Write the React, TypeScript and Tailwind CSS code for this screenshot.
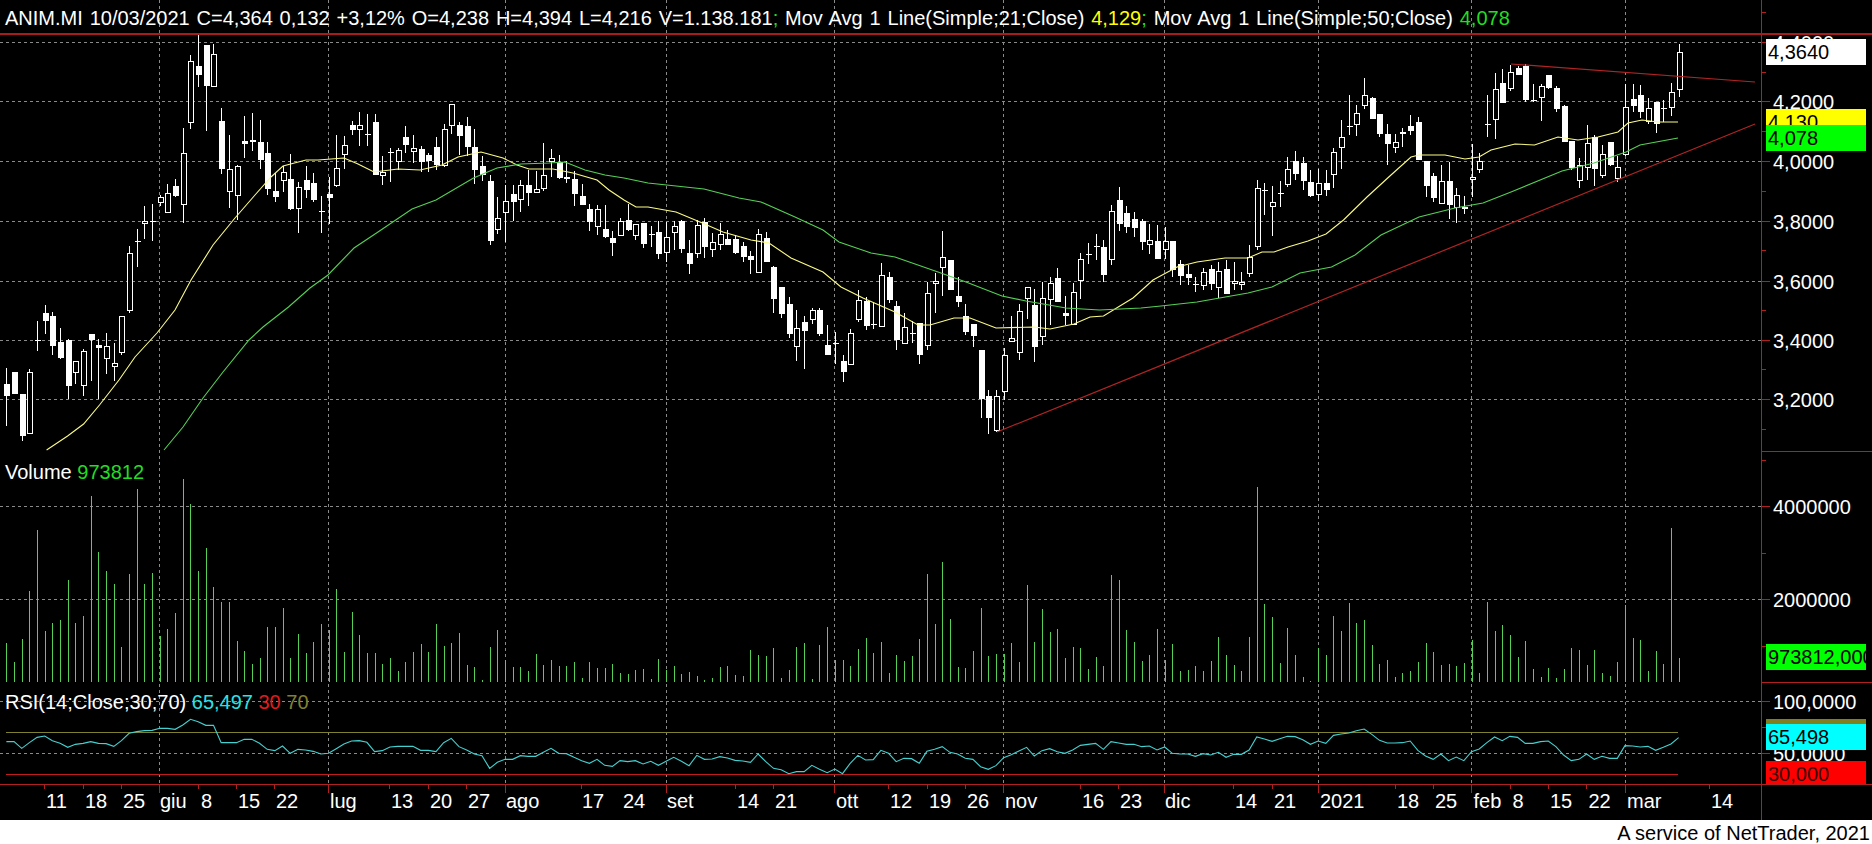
import React from 'react';

// bar spacing on the x axis, first bar sits at 6.37
const step = 7.671;
const barX = (i: number) => 6.37 + step * i;

// hi, lo, bodyTop, bodyBottom, filled
const candles: number[][] = [
  [368,426,384,396,1],[372,394,372,394,1],[394,441,394,436,1],[369,433,372,433,0],[321,351,340,341,1],[305,334,313,321,1],[312,355,316,346,1],[328,359,342,358,1],[339,399,340,386,1],[361,384,361,372,0],
  [349,396,351,385,0],[334,381,334,340,1],[339,399,345,348,1],[333,374,346,358,0],[343,381,363,366,0],[316,355,316,352,0],[246,313,253,310,0],[229,267,241,242,1],[206,239,221,223,0],[204,241,221,222,1],
  [195,206,197,202,0],[184,212,193,212,0],[179,197,186,196,1],[128,223,153,204,0],[55,129,61,122,0],[34,87,66,75,1],[45,131,45,86,1],[44,86,54,86,0],[108,174,121,169,1],[135,208,169,191,0],
  [165,220,166,195,0],[116,158,141,144,1],[113,151,140,142,1],[120,169,142,160,1],[142,195,153,189,1],[173,202,191,197,1],[166,192,172,180,0],[154,210,179,209,1],[182,233,187,208,0],[166,198,180,190,1],
  [173,202,183,200,1],[196,233,211,212,1],[177,224,194,198,1],[135,187,168,185,0],[136,169,145,154,0],[121,135,125,130,1],[112,146,125,129,0],[114,146,134,135,1],[114,175,122,175,1],[156,185,172,175,0],
  [148,182,152,153,1],[148,170,150,161,0],[126,153,137,145,1],[135,163,148,151,0],[146,172,149,162,1],[153,172,155,161,1],[137,170,147,165,1],[124,167,129,165,0],[104,134,104,125,0],[122,155,125,136,1],
  [117,156,126,147,1],[129,184,147,170,1],[156,181,166,175,1],[175,245,181,241,1],[197,234,218,229,0],[185,242,201,212,0],[185,221,194,202,1],[180,212,185,199,0],[170,206,185,193,1],[171,193,189,192,0],
  [143,191,175,188,0],[149,177,158,161,0],[155,179,162,178,1],[161,183,177,178,0],[171,206,179,194,1],[184,205,196,205,1],[204,231,209,222,1],[205,235,209,226,0],[205,238,229,237,1],[231,256,238,243,1],
  [218,236,221,235,0],[204,231,220,230,1],[224,240,224,235,0],[223,248,223,244,1],[226,247,234,235,1],[221,259,232,254,1],[222,262,237,252,0],[221,250,226,232,0],[220,253,221,249,1],[240,274,253,264,1],
  [220,258,225,253,0],[218,258,222,247,1],[233,257,242,249,0],[223,250,234,244,0],[230,245,239,245,1],[235,254,239,253,1],[242,262,246,257,1],[251,274,256,260,1],[229,272,234,272,0],[232,262,238,262,1],
  [266,313,267,299,1],[287,318,287,314,1],[297,338,304,334,1],[310,361,328,346,0],[316,369,322,331,1],[308,324,310,319,0],[308,336,310,334,1],[325,355,345,355,1],[332,364,343,344,1],[355,382,361,372,1],
  [329,365,333,364,0],[290,322,300,319,0],[297,330,301,326,1],[302,329,324,325,1],[263,326,275,326,0],[272,303,277,300,1],[301,350,306,340,1],[313,343,327,343,0],[321,343,333,334,1],[323,364,323,355,1],
  [282,350,293,345,0],[273,313,281,283,0],[231,296,257,267,0],[260,290,260,290,1],[277,307,296,302,1],[304,335,316,332,1],[324,347,324,336,1],[350,418,350,399,1],[390,434,396,418,1],[390,432,396,430,0],
  [348,400,355,391,0],[316,341,338,341,0],[304,360,311,352,0],[287,319,287,298,0],[289,362,305,347,1],[282,345,298,336,0],[277,325,283,299,0],[268,302,278,302,1],[296,325,313,316,1],[283,324,292,324,0],
  [253,299,259,280,0],[243,264,254,255,1],[234,260,246,247,1],[240,282,247,275,1],[205,265,211,259,0],[187,231,200,224,1],[206,233,213,227,1],[212,237,219,228,1],[219,250,221,242,1],[224,254,240,244,0],
  [225,259,241,259,1],[227,259,241,249,0],[241,277,241,270,1],[260,285,264,276,1],[265,285,274,278,1],[277,292,284,285,1],[268,290,272,285,0],[265,290,269,284,1],[262,298,271,287,0],[260,294,269,294,1],
  [262,290,281,283,0],[272,290,282,284,0],[245,277,257,273,0],[180,250,188,246,0],[183,215,190,191,1],[186,236,202,206,0],[181,207,193,194,1],[157,187,169,184,0],[151,180,161,174,1],[157,190,163,181,1],
  [170,197,182,196,1],[169,201,183,194,0],[170,196,183,190,1],[148,188,152,174,0],[120,169,137,147,0],[95,135,126,127,1],[105,136,113,124,0],[78,109,95,105,0],[97,119,98,119,1],[114,137,114,134,1],
  [124,165,134,144,1],[134,153,142,147,0],[128,147,132,134,1],[115,135,126,131,1],[117,160,122,160,1],[161,197,161,186,1],[173,202,176,198,1],[165,203,181,203,0],[162,219,181,205,1],[188,223,195,207,0],
  [196,214,207,209,1],[144,197,177,179,0],[153,173,161,169,0],[95,137,124,125,1],[73,139,89,119,0],[69,103,83,103,1],[65,91,72,88,0],[66,75,68,75,1],[64,102,66,100,1],[84,102,100,101,1],
  [84,121,86,97,0],[75,89,75,88,1],[86,112,88,109,1],[105,142,106,142,1],[141,170,141,168,1],[158,188,165,180,0],[125,180,143,167,0],[135,186,137,169,1],[145,178,154,175,0],[142,166,142,165,1],
  [156,182,167,178,0],[84,156,107,154,0],[84,112,99,106,1],[85,118,95,112,1],[98,124,108,121,0],[102,133,102,124,1],[100,122,108,109,1],[83,116,92,107,0],[44,97,52,89,0],
];

// traced at 3x, y = 460 + value / 3
const volumeTops = [
  550,606,538,393,210,513,489,480,360,489,468,108,276,333,372,561,342,87,372,339,528,507,459,57,132,333,264,381,426,426,543,573,612,594,501,501,444,594,522,579,546,492,510,387,576,456,525,579,579,612,594,633,606,576,552,576,492,558,549,519,615,621,660,561,510,600,621,621,633,582,615,600,618,618,606,654,606,624,624,612,639,
  642,630,627,657,597,630,618,642,636,648,660,654,621,618,645,648,570,585,588,564,654,630,561,549,657,555,501,600,600,618,567,534,579,546,639,585,603,588,537,342,492,306,477,621,624,573,444,588,582,582,549,606,375,546,447,516,507,594,561,564,627,591,618,345,360,510,546,603,585,507,600,552,633,630,618,633,603,531,585,615,633,
  531,81,432,471,609,504,585,651,663,564,585,468,513,429,489,480,555,612,600,651,639,633,606,549,576,615,612,618,609,540,639,426,513,495,525,591,543,627,651,624,654,627,564,570,615,570,639,648,606,435,534,540,633,573,612,204,594,
];
const rsi = [
  845,845,865,848,832,828,842,850,862,853,850,845,850,851,859,842,820,815,812,811,805,805,808,795,778,785,796,796,848,848,848,838,838,850,868,872,858,880,868,870,874,882,880,866,852,843,842,847,875,872,861,859,859,859,871,871,875,848,835,860,870,882,887,925,907,898,898,887,889,889,877,865,880,881,892,902,910,898,916,919,902,
  905,902,912,904,916,904,892,904,917,886,898,897,890,894,901,903,907,882,905,925,929,941,935,935,916,928,938,927,941,910,886,900,899,871,880,905,895,896,910,874,868,860,877,882,895,898,920,928,917,893,884,873,862,888,872,866,875,880,870,856,853,850,868,845,849,853,853,860,858,870,861,880,882,882,889,881,885,877,892,883,883,
  870,831,837,844,836,829,830,839,853,843,850,826,822,819,812,807,823,841,849,849,848,843,871,888,898,882,902,891,902,875,867,848,831,842,829,832,850,850,845,843,860,885,902,898,882,898,889,895,895,857,858,861,859,871,862,852,833,
];

const ma21 = '46.6,450 67.6,436 83.6,424 99.5,405 119,380 135,357 157,333 175,310 191,280 213,245 235,218 255,195 271,177 283,166 306,160 318,160 344,158 358,164 374,172 398,169 420,170 442,165 458,157 481,152 503,158 517,165 529,169 553,169 573,173 597,180 609,190 624,200 636,207 648,207 676,212 700,222 723,232 751,240 769,243 791,258 823,272 841,287 863,298 895,312 918,325 930,325 954,318 970,318 996,328 1034,327 1050,329 1074,324 1090,317 1103.5,316 1133,298 1153,280 1177,267 1197,262 1225,258 1248,258 1262,252 1274,252 1288,247 1308,241 1326,234 1343.5,220 1367,197 1391,175 1411,157 1419,155 1445,155 1465,159 1479,157 1491,150 1515,144 1534.5,145 1558,137 1578,140 1598,137 1618,132 1628,123 1642,120 1658,122 1678,122';
const ma50 = '164,450 183,427 203,398 223,372 249,340 263,327 288.5,307 310,288 328,275 354,248 378,232 412,209 436,200 473.5,178 497,168 521,164 549,163 565,162 585,170 605,175 624,178 648,183 704,189 739,198 761,202 795,217 823,230 839,242 871,253 895,257 938,272 966,282 1002,296 1026,301 1066,308 1099.5,310 1141,308 1161,306 1197,302 1248,293 1272,287 1300,273 1331.5,267 1355,255 1381,235 1419,217 1455,208 1483,203 1511,192 1562,171 1594,163 1626,152 1640,145 1678,138';

const gridY = [42.5, 101.5, 161.5, 221.5, 281.5, 340.5, 399.5, 506.5, 599.5, 701.5, 753.5];
const gridX = [159.5, 328.5, 505.5, 666.5, 834.5, 1003.5, 1164.5, 1318.5, 1471.5, 1625.5];
const minorX = [44.5, 83.5, 121.5, 198.5, 236.5, 274.5, 389.5, 428.5, 466.5, 581.5, 735.5, 773.5, 888.5, 927.5, 965.5, 1080.5, 1118.5, 1233.5, 1272.5, 1395.5, 1433.5, 1510.5, 1548.5, 1586.5, 1709.5];
const minorY = [12.5, 72.5, 131.5, 191.5, 250.5, 310.5, 369.5, 429.5, 460.5, 553.5, 646.5, 727.5];

const dateLabels: [string, number][] = [
  ['11', 46], ['18', 85], ['25', 123], ['giu', 160], ['8', 201], ['15', 238], ['22', 276], ['lug', 330], ['13', 391], ['20', 430], ['27', 468], ['ago', 506], ['17', 582], ['24', 623], ['set', 667], ['14', 737], ['21', 775], ['ott', 836], ['12', 890], ['19', 929], ['26', 967], ['nov', 1005], ['16', 1082], ['23', 1120], ['dic', 1165], ['14', 1235], ['21', 1274], ['2021', 1320], ['18', 1397], ['25', 1435], ['feb', 1473.5], ['8', 1512.5], ['15', 1550], ['22', 1588.5], ['mar', 1627], ['14', 1711],
];
const axisLabels: [string, number][] = [
  ['4,4000', 42.5], ['4,2000', 101.5], ['4,0000', 161.5], ['3,8000', 221.5], ['3,6000', 281.5], ['3,4000', 340.5], ['3,2000', 399.5], ['4000000', 506.5], ['2000000', 599.5], ['100,0000', 701.5], ['50,0000', 753.5],
];

function Candle({ i, c }: { i: number; c: number[] }) {
  const x = Math.round(barX(i));
  const [hi, lo, top, bot, filled] = c;
  return (
    <g>
      <rect x={x} y={hi} width={1} height={lo - hi} className="fill-white" />
      {filled ? (
        <rect x={x - 2} y={top} width={6} height={bot - top} className="fill-white" />
      ) : (
        <rect x={x - 2 + 0.5} y={top + 0.5} width={5} height={bot - top} className="fill-black stroke-white" />
      )}
    </g>
  );
}

function AxisBox({ y, h, bg, text, textY, color }: { y: number; h: number; bg: string; text?: string; textY?: number; color?: string }) {
  return (
    <svg x={1766} y={y} width={100} height={h}>
      <rect width={100} height={h} className={bg} />
      {text && (
        <text x={2} y={(textY ?? 0) - y + 7} className={color ?? 'fill-black'}>
          {text}
        </text>
      )}
    </svg>
  );
}

export default function App() {
  return (
    <div className="flex h-[844px] w-[1872px] flex-col overflow-hidden bg-white font-['Liberation_Sans',Arial,sans-serif] text-[20px]">
      <div className="relative h-[820px] bg-black">
        <svg width={1872} height={820} className="absolute inset-0 text-[20px]">
          {/* grid */}
          {gridY.map((y) => (
            <line key={y} x1={0} x2={1761} y1={y} y2={y} strokeDasharray="3 3" className="stroke-[#8a8a8a]" />
          ))}
          {gridX.map((x) => (
            <line key={x} x1={x} x2={x} y1={0} y2={784} strokeDasharray="3 3" className="stroke-[#8a8a8a]" />
          ))}

          {/* axes */}
          <g className="stroke-[#b02020]" shapeRendering="crispEdges">
            <line x1={0} x2={1872} y1={784.5} y2={784.5} />
            <line x1={1761.5} x2={1761.5} y1={0} y2={820} />
            <line x1={1761} x2={1872} y1={451.5} y2={451.5} />
            <line x1={1761} x2={1872} y1={682.5} y2={682.5} />
            {gridX.map((x) => (
              <line key={x} x1={x} x2={x} y1={784} y2={793} />
            ))}
            {minorX.map((x) => (
              <line key={x} x1={x} x2={x} y1={784} y2={789} />
            ))}
            {gridY.map((y) => (
              <line key={y} x1={1761} x2={1770} y1={y} y2={y} />
            ))}
            {minorY.map((y) => (
              <line key={y} x1={1761} x2={1766} y1={y} y2={y} />
            ))}
          </g>

          {/* price pane */}
          <g shapeRendering="crispEdges">
            {candles.map((c, i) => (
              <Candle key={i} i={i} c={c} />
            ))}
          </g>
          <polyline points={ma21} fill="none" strokeWidth={1.1} className="stroke-[#fbfb85]" />
          <polyline points={ma50} fill="none" strokeWidth={1.1} className="stroke-[#55d055]" />
          <line x1={997} y1={432} x2={1755} y2={124} strokeWidth={1.2} className="stroke-[#b02424]" />
          <line x1={1511} y1={64} x2={1755} y2={82} strokeWidth={1.2} className="stroke-[#b02424]" />

          {/* volume pane */}
          <g className="stroke-[#55d055]" shapeRendering="crispEdges">
            {volumeTops.map((t, i) => (
              <line key={i} x1={Math.round(barX(i)) + 0.5} x2={Math.round(barX(i)) + 0.5} y1={460 + t / 3} y2={682} />
            ))}
          </g>

          {/* rsi pane */}
          <line x1={6} x2={1678} y1={732.5} y2={732.5} className="stroke-[#80802e]" />
          <line x1={6} x2={1678} y1={774.5} y2={774.5} className="stroke-[#c01c1c]" />
          <polyline points={rsi.map((v, i) => `${barX(i)},${460 + v / 3}`).join(' ')} fill="none" strokeWidth={1.1} className="stroke-[#45d0d0]" />

          {/* labels */}
          <text x={5} y={479} className="fill-white">
            Volume <tspan className="fill-[#22dd22]">973812</tspan>
          </text>
          <text x={5} y={709} className="fill-white">
            RSI(14;Close;30;70) <tspan className="fill-[#2ee0e0]">65,497</tspan> <tspan className="fill-[#e01c1c]">30</tspan> <tspan className="fill-[#808030]">70</tspan>
          </text>
          {dateLabels.map(([t, x], i) => (
            <text key={i} x={x} y={808} className="fill-white">
              {t}
            </text>
          ))}
          {axisLabels.map(([t, y]) => (
            <text key={t} x={1773} y={y + 7} className="fill-white">
              {t}
            </text>
          ))}

          {/* last value boxes */}
          <AxisBox y={39} h={26} bg="fill-white" text="4,3640" textY={52} />
          <AxisBox y={109} h={26} bg="fill-[#ffff00]" text="4,130" textY={122} />
          <AxisBox y={125} h={26} bg="fill-[#00ff00]" text="4,078" textY={138} />
          <AxisBox y={644} h={26} bg="fill-[#00ff00]" text="973812,000" textY={657} />
          <AxisBox y={719} h={10} bg="fill-[#808020]" />
          <AxisBox y={724} h={26} bg="fill-[#00ffff]" text="65,498" textY={737} />
          <AxisBox y={761} h={23} bg="fill-[#ff0000]" text="30,000" textY={774} color="fill-[#3a0000]" />
        </svg>

        <div className="relative h-[35px] whitespace-pre border-b-2 border-[#a81c1c] pl-[5px] pt-[7px] leading-[22px] text-white [word-spacing:1.3px]">
          ANIM.MI 10/03/2021 C=4,364 0,132 +3,12% O=4,238 H=4,394 L=4,216 V=1.138.181<span className="text-[#22dd22]">;</span> Mov Avg 1 Line(Simple;21;Close) <span className="text-[#ffff00]">4,129</span><span className="text-[#22dd22]">;</span> Mov Avg 1 Line(Simple;50;Close) <span className="text-[#22dd22]">4,078</span>
        </div>
      </div>
      <div className="flex h-[24px] items-center justify-end pr-[2px] pt-[1px] leading-none text-black">A service of NetTrader, 2021</div>
    </div>
  );
}
